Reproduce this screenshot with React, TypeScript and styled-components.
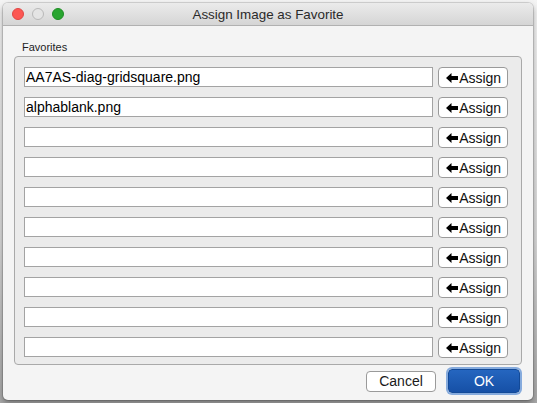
import React from "react";
import styled, { createGlobalStyle } from "styled-components";

const Global = createGlobalStyle`
  html, body { margin: 0; padding: 0; background: #ffffff; }
  body { font-family: "Liberation Sans", "Helvetica Neue", Arial, sans-serif; }
`;

const Stage = styled.div`
  width: 537px;
  height: 403px;
  padding: 3px 4px 3px 3px;
  box-sizing: border-box;
  background: linear-gradient(to bottom, #f4f4f4 0%, #d8d8d8 60%, #a8a8a8 100%);
`;

const Window = styled.div`
  width: 530px;
  height: 397px;
  display: flex;
  flex-direction: column;
  background: #f4f4f4;
  border-radius: 5px;
  overflow: hidden;
  box-shadow: 0 0 0 1px rgba(0, 0, 0, 0.12), 0 3px 6px rgba(0, 0, 0, 0.35);
`;

const TitleBar = styled.div`
  position: relative;
  height: 22px;
  flex: none;
  display: flex;
  align-items: center;
  justify-content: center;
  background: linear-gradient(to bottom, #ebebeb, #d5d5d5);
  border-bottom: 1px solid #b1b1b1;
  font-size: 13.4px;
  color: #2a2a2a;
`;

const Lights = styled.div`
  position: absolute;
  left: 9px;
  top: 5px;
  display: flex;
  gap: 8px;
`;

const Light = styled.span<{ $c: string; $b: string }>`
  width: 12px;
  height: 12px;
  border-radius: 50%;
  box-sizing: border-box;
  background: ${(p) => p.$c};
  border: 1px solid ${(p) => p.$b};
`;

const Body = styled.div`
  flex: 1;
  display: flex;
  flex-direction: column;
  padding: 14px 11px 0 11px;
`;

const GroupLabel = styled.div`
  font-size: 11px;
  color: #1e1e1e;
  margin-left: 8px;
  height: 15px;
  line-height: 15px;
`;

const Group = styled.div`
  margin-top: 1px;
  background: #ebebeb;
  border: 1px solid #a9a9a9;
  border-radius: 4px;
  padding: 10px 13px 7px 9px;
  display: flex;
  flex-direction: column;
  gap: 10px;
`;

const Row = styled.div`
  display: flex;
  align-items: center;
  gap: 5px;
  height: 20px;
`;

const Field = styled.div`
  width: 411px;
  height: 20px;
  box-sizing: border-box;
  background: #ffffff;
  border: 1px solid #a3a3a3;
  font-size: 14px;
  line-height: 18px;
  padding-left: 1px;
  color: #000;
  white-space: nowrap;
  overflow: hidden;
`;

const AssignBtn = styled.button`
  width: 70px;
  height: 21px;
  margin-top: 1px;
  box-sizing: border-box;
  display: flex;
  align-items: center;
  justify-content: center;
  gap: 1px;
  padding: 0 0 0 1px;
  background: #ffffff;
  border: 1px solid #9a9a9a;
  border-radius: 4px;
  font-family: inherit;
  font-size: 14px;
  color: #111;
`;

const Footer = styled.div`
  display: flex;
  justify-content: flex-end;
  align-items: center;
  gap: 12px;
  padding: 4px 2px 0 0;
`;

const CancelBtn = styled.button`
  width: 70px;
  height: 21px;
  box-sizing: border-box;
  background: #ffffff;
  border: 1px solid #9a9a9a;
  border-radius: 4px;
  font-family: inherit;
  font-size: 14px;
  color: #1a1a1a;
  padding: 0;
`;

const OkBtn = styled.button`
  width: 72px;
  height: 24px;
  box-sizing: border-box;
  background: linear-gradient(to bottom, #2566c0, #1650a6);
  border: 1px solid #134a98;
  border-radius: 4px;
  box-shadow: 0 0 0 2px #86abdd;
  font-family: inherit;
  font-size: 14px;
  color: #ffffff;
  padding: 0;
`;

const Arrow = () => (
  <svg width="12" height="10" viewBox="0 0 12 10">
    <polygon points="0,5 5.5,0 5.5,3 12,3 12,7 5.5,7 5.5,10" fill="#000" />
  </svg>
);

const files = ["AA7AS-diag-gridsquare.png", "alphablank.png", "", "", "", "", "", "", "", ""];

export default function App() {
  return (
    <>
      <Global />
      <Stage>
        <Window>
          <TitleBar>
            <Lights>
              <Light $c="#fc5753" $b="#df4744" />
              <Light $c="#e4e4e4" $b="#b8b8b8" />
              <Light $c="#29a530" $b="#1f8d25" />
            </Lights>
            Assign Image as Favorite
          </TitleBar>
          <Body>
            <GroupLabel>Favorites</GroupLabel>
            <Group>
              {files.map((f, i) => (
                <Row key={i}>
                  <Field>{f}</Field>
                  <AssignBtn>
                    <Arrow />
                    Assign
                  </AssignBtn>
                </Row>
              ))}
            </Group>
            <Footer>
              <CancelBtn>Cancel</CancelBtn>
              <OkBtn>OK</OkBtn>
            </Footer>
          </Body>
        </Window>
      </Stage>
    </>
  );
}
